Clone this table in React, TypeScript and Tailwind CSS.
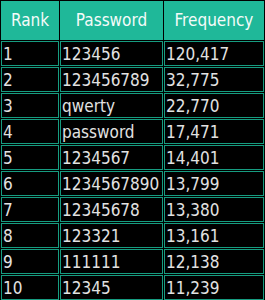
import React from 'react';

const rows = [
  { rank: 1, password: '123456', frequency: '120,417' },
  { rank: 2, password: '123456789', frequency: '32,775' },
  { rank: 3, password: 'qwerty', frequency: '22,770' },
  { rank: 4, password: 'password', frequency: '17,471' },
  { rank: 5, password: '1234567', frequency: '14,401' },
  { rank: 6, password: '1234567890', frequency: '13,799' },
  { rank: 7, password: '12345678', frequency: '13,380' },
  { rank: 8, password: '123321', frequency: '13,161' },
  { rank: 9, password: '111111', frequency: '12,138' },
  { rank: 10, password: '12345', frequency: '11,239' },
];

const headCell = 'flex items-center justify-center bg-[#1fb899] text-[#f4fbf9] h-[39px]';
const bodyCell = 'flex items-center pl-[1px] pt-[1px] border border-[#169c80] bg-black text-[#e2e2e2] h-[25px] whitespace-nowrap';

export default function App() {
  return (
    <div className="w-[265px] h-[300px] overflow-hidden bg-black">
      <div
        className="grid grid-cols-[58px_103px_100px] gap-[1px] p-[1px] text-[17px] leading-none"
        style={{ fontFamily: '"DejaVu Sans Condensed", "DejaVu Sans", sans-serif' }}
      >
        {/* Header */}
        <div className={headCell}>Rank</div>
        <div className={headCell}>Password</div>
        <div className={headCell}>Frequency</div>

        {/* Rows */}
        {rows.map((r) => (
          <React.Fragment key={r.rank}>
            <div className={bodyCell}>{r.rank}</div>
            <div className={bodyCell}>{r.password}</div>
            <div className={bodyCell}>{r.frequency}</div>
          </React.Fragment>
        ))}
      </div>
    </div>
  );
}
